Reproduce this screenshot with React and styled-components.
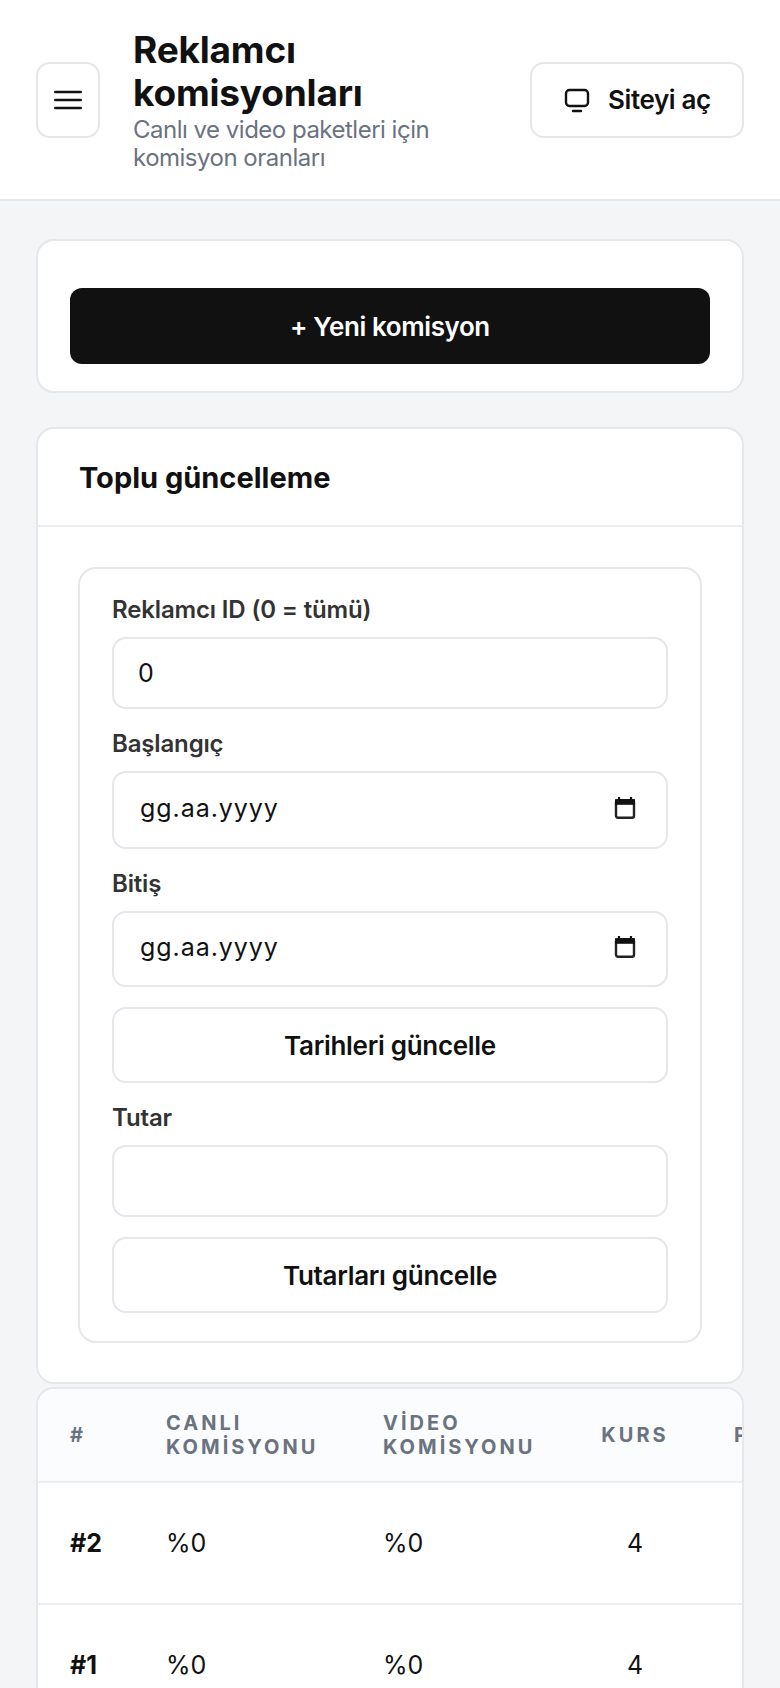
import React from "react";
import styled, { createGlobalStyle } from "styled-components";

const Global = createGlobalStyle`
  * { box-sizing: border-box; }
  html, body { margin: 0; padding: 0; height: 100%; overflow: hidden; }
  body { background: #f3f5f7; font-family: Inter, "Liberation Sans", sans-serif; color: #111; }
`;

const Header = styled.header`
  display: flex;
  align-items: center;
  gap: 33px;
  height: 201px;
  padding: 0 36px;
  background: #fff;
  border-bottom: 2px solid #e5e9ea;
`;
const IconButton = styled.button`
  flex: none;
  display: flex;
  align-items: center;
  justify-content: center;
  width: 64px;
  height: 76px;
  padding: 0;
  background: #fff;
  border: 2px solid #e5e7eb;
  border-radius: 14px;
  color: #111;
`;
const TitleBlock = styled.div`
  flex: 1;
  min-width: 0;
`;
const Title = styled.h1`
  margin: 0 0 2px;
  font-size: 37px;
  line-height: 43px;
  font-weight: 700;
  letter-spacing: -0.2px;
  color: #111;
`;
const Subtitle = styled.p`
  margin: 0;
  font-size: 24px;
  line-height: 28px;
  letter-spacing: -0.5px;
  color: #6b7280;
`;
const SiteButton = styled.button`
  flex: none;
  display: flex;
  align-items: center;
  gap: 17px;
  width: 214px;
  height: 76px;
  padding: 0 0 0 31px;
  background: #fff;
  border: 2px solid #e5e7eb;
  border-radius: 14px;
  font: 600 26px Inter, "Liberation Sans", sans-serif;
  letter-spacing: -0.4px;
  color: #111;
`;
const Main = styled.main`
  padding: 38px 36px 0;
`;
const Card = styled.section`
  background: #fff;
  border: 2px solid #e5e7eb;
  border-radius: 18px;
  overflow: hidden;
`;
const ActionCard = styled(Card)`
  padding: 47px 32px 27px;
  margin-bottom: 34px;
`;
const PrimaryButton = styled.button`
  display: block;
  width: 100%;
  height: 76px;
  background: #111;
  color: #fff;
  border: 0;
  border-radius: 12px;
  font: 600 26px Inter, "Liberation Sans", sans-serif;
  letter-spacing: -0.4px;
`;
const CardHead = styled.div`
  display: flex;
  align-items: center;
  height: 98px;
  padding-left: 41px;
  border-bottom: 2px solid #eceef1;
`;
const CardTitle = styled.h2`
  margin: 0;
  font-size: 29px;
  font-weight: 700;
  color: #111;
`;
const CardBody = styled.div`
  padding: 40px 40px 39px;
`;
const InnerCard = styled.div`
  display: flex;
  flex-direction: column;
  gap: 20px;
  padding: 26px 32px 28px;
  border: 2px solid #e5e7eb;
  border-radius: 18px;
`;
const Field = styled.label`
  display: flex;
  flex-direction: column;
  gap: 12px;
`;
const LabelText = styled.span`
  font-size: 24px;
  line-height: 30px;
  font-weight: 600;
  letter-spacing: -0.15px;
  color: #333;
`;
const TextInput = styled.input`
  width: 100%;
  height: 72px;
  padding: 0 24px;
  background: #fff;
  border: 2px solid #e5e7eb;
  border-radius: 14px;
  font: 400 25px Inter, "Liberation Sans", sans-serif;
  color: #111;
  outline: none;
`;
const DateBox = styled.div`
  display: flex;
  align-items: center;
  justify-content: space-between;
  height: ${(p) => p.$h}px;
  padding: 0 30px 4px 26px;
  border: 2px solid #e5e7eb;
  border-radius: 14px;
  background: #fff;
`;
const DateText = styled.span`
  font-size: 25px;
  letter-spacing: 0.95px;
  color: #111;
`;
const OutlineButton = styled.button`
  display: block;
  width: 100%;
  height: 76px;
  background: #fff;
  border: 2px solid #e5e7eb;
  border-radius: 14px;
  font: 600 26px Inter, "Liberation Sans", sans-serif;
  letter-spacing: -0.3px;
  color: #111;
`;
const TableCard = styled(Card)`
  margin-top: 3px;
`;
const Table = styled.table`
  table-layout: fixed;
  width: 864px;
  border-collapse: collapse;
`;
const Th = styled.th`
  width: ${(p) => p.$w}px;
  height: 93px;
  padding: 0 32px;
  background: #fafcfe;
  border-bottom: 2px solid #eceef1;
  text-align: ${(p) => (p.$center ? "center" : "left")};
  font-size: 20px;
  line-height: 24px;
  font-weight: 700;
  letter-spacing: 3px;
  color: #6b7280;
`;
const Td = styled.td`
  height: 122px;
  padding: 0 32px;
  border-bottom: 2px solid #eceef1;
  text-align: ${(p) => (p.$center ? "center" : "left")};
  font-size: 25px;
  font-weight: ${(p) => (p.$bold ? 700 : 400)};
  color: #111;
`;

const MenuIcon = () => (
  <svg width="32" height="32" viewBox="0 0 24 24" fill="none" stroke="currentColor" strokeWidth="2" strokeLinecap="round">
    <path d="M2.5 6h19M2.5 12h19M2.5 18h19" />
  </svg>
);
const MonitorIcon = () => (
  <svg width="28" height="28" viewBox="0 0 28 28" fill="none" stroke="currentColor" strokeWidth="2.4" strokeLinecap="round" strokeLinejoin="round">
    <rect x="3" y="4" width="22" height="16" rx="3.5" />
    <path d="M10 25h8" />
  </svg>
);
const CalendarIcon = () => (
  <svg width="22" height="24" viewBox="0 0 22 24" fill="none">
    <path d="M5 1v4M17 1v4" stroke="#111" strokeWidth="2.2" />
    <rect x="2" y="4.2" width="18" height="17.6" rx="2" stroke="#222" strokeWidth="2.4" />
    <rect x="1" y="3.2" width="20" height="5.6" fill="#111" />
  </svg>
);

const rows = [
  { id: "#2", live: "%0", video: "%0", course: "4" },
  { id: "#1", live: "%0", video: "%0", course: "4" },
];

export default function App() {
  return (
    <>
      <Global />
      <Header>
        <IconButton aria-label="Menü"><MenuIcon /></IconButton>
        <TitleBlock>
          <Title>Reklamcı komisyonları</Title>
          <Subtitle>Canlı ve video paketleri için komisyon oranları</Subtitle>
        </TitleBlock>
        <SiteButton><MonitorIcon />Siteyi aç</SiteButton>
      </Header>
      <Main>
        <ActionCard>
          <PrimaryButton>+ Yeni komisyon</PrimaryButton>
        </ActionCard>
        <Card>
          <CardHead><CardTitle>Toplu güncelleme</CardTitle></CardHead>
          <CardBody>
            <InnerCard>
              <Field>
                <LabelText>Reklamcı ID (0 = tümü)</LabelText>
                <TextInput defaultValue="0" />
              </Field>
              <Field>
                <LabelText>Başlangıç</LabelText>
                <DateBox $h={78}><DateText>gg.aa.yyyy</DateText><CalendarIcon /></DateBox>
              </Field>
              <Field>
                <LabelText>Bitiş</LabelText>
                <DateBox $h={76}><DateText>gg.aa.yyyy</DateText><CalendarIcon /></DateBox>
              </Field>
              <OutlineButton>Tarihleri güncelle</OutlineButton>
              <Field>
                <LabelText>Tutar</LabelText>
                <TextInput />
              </Field>
              <OutlineButton>Tutarları güncelle</OutlineButton>
            </InnerCard>
          </CardBody>
        </Card>
        <TableCard>
          <Table>
            <thead>
              <tr>
                <Th $w={96}>#</Th>
                <Th $w={217}>CANLI KOMİSYONU</Th>
                <Th $w={217}>VİDEO KOMİSYONU</Th>
                <Th $w={134} $center>KURS</Th>
                <Th $w={200}>PAKET</Th>
              </tr>
            </thead>
            <tbody>
              {rows.map((r) => (
                <tr key={r.id}>
                  <Td $bold>{r.id}</Td>
                  <Td>{r.live}</Td>
                  <Td>{r.video}</Td>
                  <Td $center>{r.course}</Td>
                  <Td />
                </tr>
              ))}
            </tbody>
          </Table>
        </TableCard>
      </Main>
    </>
  );
}
